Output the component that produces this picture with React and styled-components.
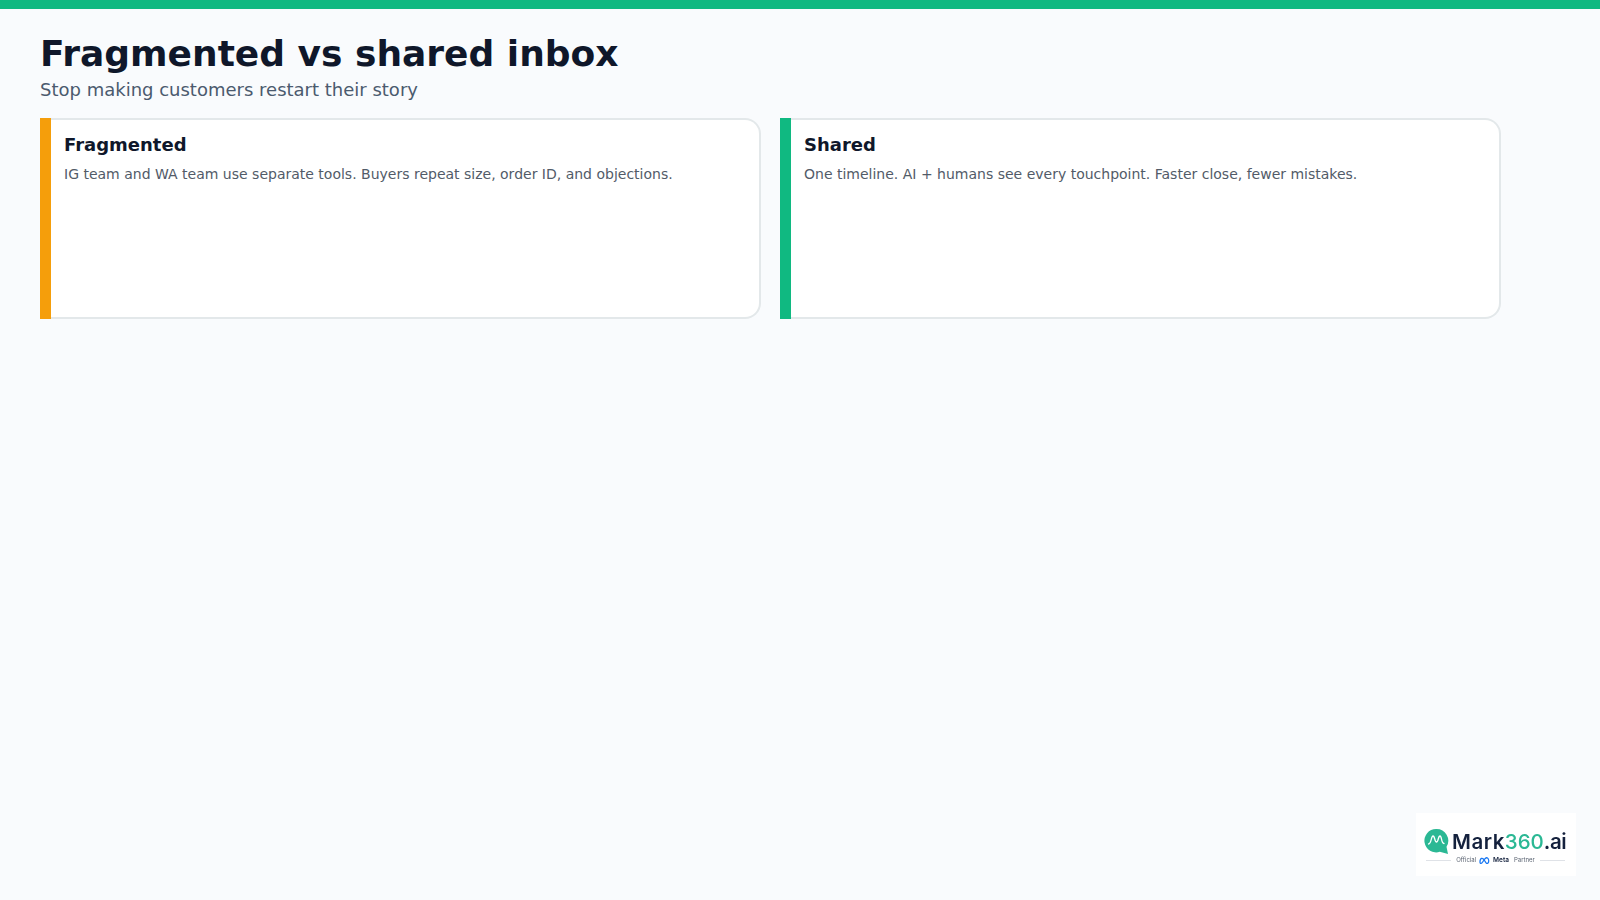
import React from "react";
import styled, { createGlobalStyle } from 'styled-components';

const GlobalStyle = createGlobalStyle`
    html, body {
        margin: 0;
        padding: 0;
        background: #f9fbfd;
        font-family: "DejaVu Sans", sans-serif;
    }
`;

const Page = styled.div`
    position: relative;
    width: 1600px;
    height: 900px;
    overflow: hidden;
    background: #f9fbfd;
`;

const TopBar = styled.div`
    height: 9px;
    background: #10b981;
`;

const Content = styled.div`
    padding: 23px 40px 0;
`;

const Title = styled.h1`
    margin: 0;
    font-size: 36px;
    line-height: 44px;
    font-weight: 700;
    color: #0f172a;
`;

const Subtitle = styled.p`
    margin: 2px 0 0 0;
    font-size: 18px;
    line-height: 24px;
    color: #4b5a6e;
`;

const Cards = styled.div`
    display: grid;
    grid-template-columns: 721px 721px;
    gap: 19px;
    margin-top: 16px;
`;

const Card = styled.div`
    display: flex;
    height: 201px;
`;

const Stripe = styled.div`
    width: 11px;
    flex-shrink: 0;
    background: ${props => props.$accent};
`;

const CardBody = styled.div`
    flex: 1;
    box-sizing: border-box;
    padding: 13px 22px 13px 13px;
    background: #ffffff;
    border: 2px solid #e3e8ea;
    border-left: none;
    border-radius: 0 16px 16px 0;
`;

const CardTitle = styled.h3`
    margin: 0;
    font-size: 18px;
    line-height: 24px;
    font-weight: 700;
    color: #0f172a;
`;

const CardText = styled.p`
    margin: 7px 0 0 0;
    font-size: 14px;
    line-height: 20px;
    color: #525b68;
`;

const LogoBox = styled.div`
    position: absolute;
    right: 24px;
    bottom: 24px;
    width: 160px;
    height: 63px;
    box-sizing: border-box;
    padding: 15px 9px 0 8px;
    background: #ffffff;
    filter: blur(0.35px);
`;

const LogoRow = styled.div`
    display: flex;
    align-items: center;
    gap: 3px;
    height: 26px;
    white-space: nowrap;

    svg {
        flex-shrink: 0;
    }
`;

const LogoName = styled.span`
    font-family: Inter, sans-serif;
    font-size: 20.5px;
    line-height: 26px;
    font-weight: 600;
    letter-spacing: 0.5px;
    color: #14213d;
    position: relative;
    top: 1px;
`;

const LogoAccent = styled.span`
    font-weight: 500;
    letter-spacing: 0;
    color: #2bb894;
`;

const LogoSuffix = styled.span`
    letter-spacing: -0.4px;
`;

const PartnerRow = styled.div`
    display: flex;
    align-items: center;
    gap: 3px;
    margin-top: 2px;
    font-family: Inter, sans-serif;
    font-size: 6px;
    line-height: 8px;
    color: #5b6472;
    white-space: nowrap;
`;

const PartnerLine = styled.div`
    flex: 1;
    height: 1px;
    background: #dfe2e7;
    margin: 0 2px;
`;

const MetaName = styled.span`
    font-size: 6.5px;
    font-weight: 600;
    color: #14213d;
    margin-right: 2px;
`;

const LogoMark = () => (
    <svg width="25" height="26" viewBox="0 0 25 26">
        <path d="M12 1a11.700 11.700 0 1 0 3.800 22.800L24 26l-1.500-7.200A11.700 11.700 0 0 0 12 1z" fill="#2bb894" />
        <path d="M4.500 16c3 0 2.500-8 4.500-8s1.500 6 3.500 6 1.500-6 3.500-6 1 7.500 4 7.500" fill="none" stroke="#ffffff" strokeWidth="1.300" strokeLinecap="round" />
    </svg>
);

const MetaMark = () => (
    <svg width="11" height="7" viewBox="0 0 22 14">
        <path d="M2 10c0-8 5-10 9-3s5 7 7 5 2-8-1-10-6 2-9 7-6 5-6 1z" fill="none" stroke="#1877f2" strokeWidth="2.500" />
    </svg>
);

const App = () => {
    return (
        <Page>
            <GlobalStyle />
            <TopBar />
            <Content>
                <Title>Fragmented vs shared inbox</Title>
                <Subtitle>Stop making customers restart their story</Subtitle>
                <Cards>
                    <Card>
                        <Stripe $accent="#f59e0b" />
                        <CardBody>
                            <CardTitle>Fragmented</CardTitle>
                            <CardText>IG team and WA team use separate tools. Buyers repeat size, order ID, and objections.</CardText>
                        </CardBody>
                    </Card>
                    <Card>
                        <Stripe $accent="#10b981" />
                        <CardBody>
                            <CardTitle>Shared</CardTitle>
                            <CardText>One timeline. AI + humans see every touchpoint. Faster close, fewer mistakes.</CardText>
                        </CardBody>
                    </Card>
                </Cards>
            </Content>
            <LogoBox>
                <LogoRow>
                    <LogoMark />
                    <LogoName>Mark<LogoAccent>360</LogoAccent><LogoSuffix>.ai</LogoSuffix></LogoName>
                </LogoRow>
                <PartnerRow>
                    <PartnerLine />
                    <span>Official</span>
                    <MetaMark />
                    <MetaName>Meta</MetaName>
                    <span>Partner</span>
                    <PartnerLine />
                </PartnerRow>
            </LogoBox>
        </Page>
    )
};

export default App;
